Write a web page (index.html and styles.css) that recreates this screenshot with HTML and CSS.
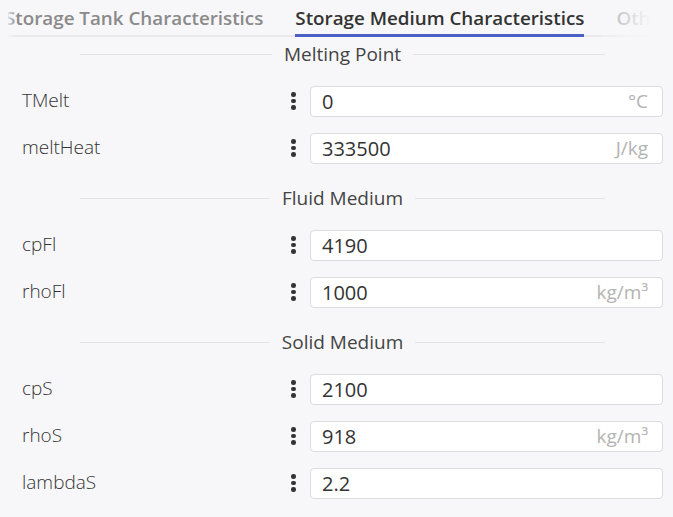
FILE: index.html
```html
<!doctype html>
<html lang="en">
<head>
    <meta charset="UTF-8">
    <title>Storage Medium Characteristics</title>
    <link rel="stylesheet" href="styles.css">
</head>
<body>
    <div class="tabs">
        <div class="tab-track">
            <div class="tab">Storage Tank Characteristics</div>
            <div class="tab active">Storage Medium Characteristics</div>
            <div class="tab">Other Parameters</div>
        </div>
    </div>

    <div class="form">
        <div class="section-title">Melting Point</div>
        <div class="row">
            <label>TMelt</label>
            <span class="dots"><i></i><i></i><i></i></span>
            <div class="field"><span>0</span><em>°C</em></div>
        </div>
        <div class="row">
            <label>meltHeat</label>
            <span class="dots"><i></i><i></i><i></i></span>
            <div class="field"><span>333500</span><em>J/kg</em></div>
        </div>

        <div class="section-title">Fluid Medium</div>
        <div class="row">
            <label>cpFl</label>
            <span class="dots"><i></i><i></i><i></i></span>
            <div class="field"><span>4190</span></div>
        </div>
        <div class="row">
            <label>rhoFl</label>
            <span class="dots"><i></i><i></i><i></i></span>
            <div class="field"><span>1000</span><em>kg/m³</em></div>
        </div>

        <div class="section-title">Solid Medium</div>
        <div class="row">
            <label>cpS</label>
            <span class="dots"><i></i><i></i><i></i></span>
            <div class="field"><span>2100</span></div>
        </div>
        <div class="row">
            <label>rhoS</label>
            <span class="dots"><i></i><i></i><i></i></span>
            <div class="field"><span>918</span><em>kg/m³</em></div>
        </div>
        <div class="row">
            <label>lambdaS</label>
            <span class="dots"><i></i><i></i><i></i></span>
            <div class="field"><span>2.2</span></div>
        </div>
    </div>
</body>
</html>
```

FILE: styles.css
```css
*{padding:0;margin:0;box-sizing:border-box;}

body{
    background:#f7f7f9;
    font-family:"Open Sans","Liberation Sans",sans-serif;
    color:#444;
}

/* tab strip, scrolled sideways */
.tabs{
    position:relative;
    margin:0 8px;
    height:37px;
    box-shadow:inset 0 -2px 0 #e9e9ec;
    overflow:hidden;
}
.tabs::before,
.tabs::after{
    content:"";
    position:absolute;
    top:0;
    bottom:0;
    z-index:1;
}
.tabs::before{
    left:0;
    width:8px;
    background:linear-gradient(to right,rgba(247,247,249,0.8),rgba(247,247,249,0));
}
.tabs::after{
    right:0;
    width:64px;
    background:linear-gradient(to left,#f7f7f9 22%,rgba(247,247,249,0.35));
}
.tab-track{
    display:flex;
    margin-left:-3px;
    gap:32px;
}
.tab{
    flex:none;
    font-weight:600;
    font-size:18.8px;
    line-height:32px;
    padding-top:2px;
    border-bottom:3px solid transparent;
    color:#8a8a8a;
    white-space:nowrap;
}
.tab.active{
    color:#333;
    border-bottom-color:#4a60c6;
}

.form{
    padding:0 10px 0 22px;
}
.section-title{
    display:flex;
    align-items:center;
    gap:12px;
    margin:6px 58px 0;
    height:44px;
    font-size:19px;
    color:#444;
}
.section-title:first-child{
    margin-top:-5px;
}
.section-title::before,
.section-title::after{
    content:"";
    flex:1;
    height:1px;
    background:#e4e4e6;
}

.row{
    display:grid;
    grid-template-columns:1fr 19px 353px;
    align-items:center;
    height:47px;
}
.row label{
    font-size:19px;
    font-weight:300;
    color:#333;
}
.dots{
    display:flex;
    flex-direction:column;
    gap:2px;
    margin-top:3px;
}
.dots i{
    width:4.6px;
    height:4.6px;
    border-radius:50%;
    background:#333;
}
.field{
    display:flex;
    align-items:center;
    justify-content:space-between;
    height:31px;
    margin-top:3px;
    padding:0 14px 0 11px;
    background:#fff;
    border:1px solid #dcdcdf;
    border-radius:4px;
    font-size:20px;
}
.field span{color:#333;}
.field em{
    font-style:normal;
    font-size:19px;
    color:#b3b3b3;
}
```
